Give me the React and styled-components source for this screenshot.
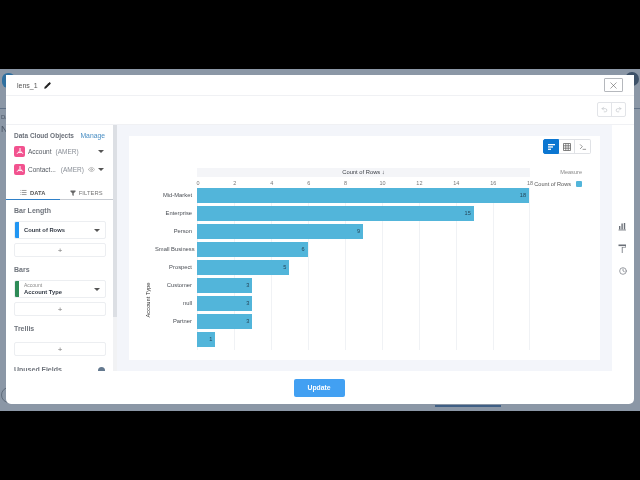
import React from "react";
import styled, { createGlobalStyle } from "styled-components";
import { X, Undo2, Redo2, Terminal, List, Filter, Eye, Pencil, Clock } from "lucide-react";

const GlobalStyle = createGlobalStyle`
  html, body { margin: 0; padding: 0; background: #000; }
  body { font-family: "Liberation Sans", Arial, sans-serif; }
`;

const Stage = styled.div`
  width: 640px;
  height: 480px;
  background: #000;
  padding-top: 69px;
  box-sizing: border-box;
  overflow: hidden;
`;
const Backdrop = styled.div`
  position: relative;
  height: 342px;
  background: #8b97a6;
  filter: blur(0.3px);
`;
const BackLogo = styled.div`
  position: absolute;
  left: 2px;
  top: 4px;
  width: 13px;
  height: 15px;
  border-radius: 6px;
  background: #2f6f9f;
`;
const BackAvatar = styled.div`
  position: absolute;
  right: 1px;
  top: 3px;
  width: 14px;
  height: 14px;
  border-radius: 50%;
  background: #3d5168;
`;
const BackRule = styled.div`
  position: absolute;
  left: 0;
  right: 0;
  top: 39px;
  height: 1px;
  background: #5f7086;
`;
const BackText = styled.div`
  position: absolute;
  left: 1px;
  top: ${(p) => p.$top}px;
  font-size: ${(p) => p.$size}px;
  color: #4a5564;
`;
const BackCircle = styled.div`
  position: absolute;
  left: 1px;
  bottom: 8px;
  width: 16px;
  height: 16px;
  border: 1px solid #5f6b7a;
  border-radius: 50%;
  box-sizing: border-box;
`;
const BackTab = styled.div`
  position: absolute;
  left: 435px;
  bottom: 4px;
  width: 66px;
  height: 2px;
  background: #3f5f85;
`;
const Modal = styled.div`
  position: absolute;
  left: 6px;
  top: 6px;
  width: 628px;
  height: 329px;
  background: #fff;
  border-radius: 0 0 5px 5px;
  display: flex;
  flex-direction: column;
  overflow: hidden;
`;
const Header = styled.div`
  height: 20px;
  flex: none;
  display: flex;
  align-items: center;
  justify-content: space-between;
  padding: 0 11px;
  border-bottom: 1px solid #f0f1f4;
`;
const Title = styled.div`
  display: flex;
  align-items: center;
  gap: 6px;
  font-size: 7px;
  color: #555;
`;
const CloseButton = styled.div`
  width: 19px;
  height: 14px;
  box-sizing: border-box;
  border: 1px solid #b5b8bd;
  border-radius: 1px;
  color: #555;
  display: flex;
  align-items: center;
  justify-content: center;
`;
const Toolbar = styled.div`
  height: 28px;
  flex: none;
  display: flex;
  align-items: center;
  justify-content: flex-end;
  padding: 0 8px 1px 0;
  box-sizing: border-box;
`;
const UndoGroup = styled.div`
  display: flex;
  border: 1px solid #e2e4e8;
  border-radius: 2px;
`;
const UndoCell = styled.div`
  width: 13px;
  height: 13px;
  display: flex;
  align-items: center;
  justify-content: center;
  color: #b9bcc2;
  & + & { border-left: 1px solid #e2e4e8; }
`;
const Body = styled.div`
  flex: 1;
  min-height: 0;
  display: flex;
  border-top: 1px solid #f0f1f4;
`;
const Sidebar = styled.div`
  width: 107px;
  flex: none;
  overflow: hidden;
  padding-top: 5px;
  box-sizing: border-box;
`;
const SidePad = styled.div`
  padding: 0 7px 0 8px;
`;
const ObjectsHead = styled.div`
  display: flex;
  justify-content: space-between;
  align-items: center;
  height: 10px;
  margin-bottom: -2px;
  font-size: 6.5px;
  font-weight: 700;
  color: #6a6f78;
`;
const ManageLink = styled.span`
  font-weight: 400;
  font-size: 6.8px;
  color: #4a8fc4;
  padding-right: 1px;
`;
const ObjectRow = styled.div`
  display: flex;
  align-items: center;
  height: 10px;
  margin-top: 8px;
  font-size: 6.5px;
  color: #555a62;
`;
const ObjectIcon = styled.div`
  width: 11px;
  height: 11px;
  border-radius: 2px;
  background: #f2528f;
  margin-right: 3px;
  flex: none;
  display: flex;
  align-items: center;
  justify-content: center;
`;
const ObjectRegion = styled.span`
  color: #8a8f97;
  margin-left: ${(p) => p.$gap}px;
`;
const Caret = styled.span`
  margin-left: auto;
  margin-right: ${(p) => p.$right}px;
  width: 0;
  height: 0;
  border-left: 3px solid transparent;
  border-right: 3px solid transparent;
  border-top: 3.5px solid #555;
`;
const Tabs = styled.div`
  display: flex;
  margin-top: 12px;
  height: 13px;
  border-bottom: 1px solid #c9cdd3;
`;
const TabItem = styled.div`
  flex: 1;
  display: flex;
  align-items: center;
  justify-content: center;
  gap: 3px;
  font-size: 5.8px;
  letter-spacing: 0.1px;
  font-weight: ${(p) => (p.$active ? 700 : 400)};
  color: ${(p) => (p.$active ? "#555" : "#777")};
  box-shadow: ${(p) => (p.$active ? "0 1px 0 #2f80c8" : "none")};
`;
const SectionLabel = styled.div`
  font-size: 7px;
  font-weight: 700;
  color: #6f747c;
  height: 10px;
  line-height: 10px;
  margin-top: ${(p) => p.$top}px;
  margin-bottom: ${(p) => p.$bottom}px;
  display: flex;
  justify-content: space-between;
  align-items: center;
`;
const FieldCard = styled.div`
  height: 18px;
  border: 1px solid #eceef1;
  border-radius: 2px;
  box-sizing: border-box;
  display: flex;
  align-items: center;
  overflow: hidden;
  font-size: 5.8px;
  font-weight: 700;
  color: #333a45;
`;
const FieldStripe = styled.div`
  width: 5px;
  align-self: stretch;
  margin: -1px 5px -1px -1px;
  background: ${(p) => p.$color};
  border-radius: 2px 0 0 2px;
  flex: none;
`;
const FieldText = styled.div`
  line-height: 7px;
`;
const FieldSub = styled.div`
  font-size: 5px;
  font-weight: 400;
  color: #888;
`;
const AddBox = styled.div`
  height: 14px;
  margin-top: ${(p) => p.$top}px;
  border: 1px solid #eceef1;
  border-radius: 2px;
  box-sizing: border-box;
  display: flex;
  align-items: center;
  justify-content: center;
  font-size: 8px;
  color: #777;
`;
const InfoDot = styled.div`
  width: 7px;
  height: 7px;
  border-radius: 50%;
  background: #64798f;
  margin-right: 1px;
`;
const ScrollTrack = styled.div`
  width: 4px;
  flex: none;
  background: #f1f2f4;
`;
const ScrollThumb = styled.div`
  height: 192px;
  background: #dcdfe4;
`;
const Canvas = styled.div`
  width: 495px;
  flex: none;
  background: #f3f5fa;
  padding: 11px 12px;
  box-sizing: border-box;
  display: flex;
`;
const ChartCard = styled.div`
  flex: 1;
  background: #fff;
  padding: 3px 7px 0 0;
  box-sizing: border-box;
`;
const ChartTools = styled.div`
  display: flex;
  justify-content: flex-end;
  margin-right: 2px;
`;
const ToolButton = styled.div`
  width: 16px;
  height: 15px;
  box-sizing: border-box;
  display: flex;
  align-items: center;
  justify-content: center;
  border: 1px solid ${(p) => (p.$active ? "#0b76d1" : "#e0e2e6")};
  background: ${(p) => (p.$active ? "#0b76d1" : "#fff")};
  color: ${(p) => (p.$active ? "#fff" : "#666")};
  border-left-width: ${(p) => (p.$active ? 1 : 0)}px;
  &:first-child { border-radius: 2px 0 0 2px; }
  &:last-child { border-radius: 0 2px 2px 0; }
`;
const ChartRow = styled.div`
  display: flex;
  margin-top: 14px;
`;
const AxisTitle = styled.div`
  width: 26px;
  flex: none;
  display: flex;
  align-items: center;
  justify-content: center;
  padding: 84px 0 0 12px;
  box-sizing: border-box;
  height: 180px;
`;
const AxisTitleText = styled.div`
  transform: rotate(-90deg);
  white-space: nowrap;
  font-size: 5.8px;
  color: #333;
`;
const RowLabels = styled.div`
  width: 42px;
  flex: none;
  padding-top: 20px;
`;
const RowLabel = styled.div`
  height: 18px;
  font-size: 5.8px;
  line-height: 15px;
  color: #4a4e55;
  text-align: right;
  padding-right: 5px;
  box-sizing: border-box;
  white-space: nowrap;
`;
const Plot = styled.div`
  width: 333px;
  flex: none;
`;
const AxisBand = styled.div`
  height: 9px;
  background: #f4f5f8;
  font-size: 5.8px;
  line-height: 9px;
  color: #3d4148;
  text-align: center;
`;
const Ticks = styled.div`
  height: 11px;
  position: relative;
`;
const Tick = styled.span`
  position: absolute;
  top: 3px;
  transform: translateX(-50%);
  font-size: 5.5px;
  line-height: 7px;
  color: #777;
`;
const Bars = styled.div`
  background-image: linear-gradient(to right, #f0f2f5 1px, transparent 1px);
  background-size: 37px 100%;
  border-right: 1px solid #f0f2f5;
`;
const BarRow = styled.div`
  height: 18px;
`;
const Bar = styled.div`
  height: 15px;
  background: #52b5da;
  font-size: 5.6px;
  line-height: 15px;
  color: #24465a;
  text-align: right;
  padding-right: 3px;
  box-sizing: border-box;
`;
const Legend = styled.div`
  flex: none;
  width: 47px;
  margin-left: 5px;
  font-size: 5.6px;
`;
const LegendTitle = styled.div`
  color: #888;
  text-align: right;
  height: 13px;
  line-height: 9px;
`;
const LegendItem = styled.div`
  display: flex;
  align-items: center;
  justify-content: flex-end;
  gap: 5px;
  color: #555;
  white-space: nowrap;
`;
const LegendSwatch = styled.div`
  width: 6px;
  height: 6px;
  border-radius: 1px;
  background: #52b5da;
  flex: none;
`;
const Rail = styled.div`
  flex: 1;
  display: flex;
  flex-direction: column;
  align-items: center;
  gap: 13px;
  padding: 97px 1px 0 0;
  color: #6b7078;
`;
const Footer = styled.div`
  height: 33px;
  flex: none;
  display: flex;
  align-items: center;
  justify-content: center;
`;
const UpdateButton = styled.div`
  width: 51px;
  height: 18px;
  margin-left: -2px;
  background: #42a0f2;
  border-radius: 2px;
  color: #fff;
  font-size: 6.8px;
  font-weight: 700;
  display: flex;
  align-items: center;
  justify-content: center;
`;

const rows = [
  ["Mid-Market", 18],
  ["Enterprise", 15],
  ["Person", 9],
  ["Small Business", 6],
  ["Prospect", 5],
  ["Customer", 3],
  ["null", 3],
  ["Partner", 3],
  ["", 1],
];
const ticks = [0, 2, 4, 6, 8, 10, 12, 14, 16, 18];
const UNIT = 18.45;

const ObjectGlyph = () => (
  <svg width="8" height="8" viewBox="0 0 8 8" fill="none" stroke="#fff" strokeWidth="1">
    <path d="M4 1 V3.5 L1 6.8 M4 3.5 L7 6.8 M2.2 5.6 H5.8" />
  </svg>
);

const BarsGlyph = () => (
  <svg width="9" height="9" viewBox="0 0 9 9" fill="currentColor">
    <rect x="1" y="4" width="1.4" height="3.5" />
    <rect x="3.4" y="1.5" width="1.4" height="6" />
    <rect x="5.8" y="1" width="1.4" height="6.5" />
    <rect x="0.5" y="7.6" width="7.5" height="0.8" />
  </svg>
);

const RollerGlyph = () => (
  <svg width="9" height="10" viewBox="0 0 9 10" fill="currentColor">
    <rect x="0.5" y="0.5" width="7.5" height="1.6" />
    <path d="M8 2 V3.6 H4.6 V9 H3.8 V3 H7.4 V2 Z" />
  </svg>
);

const HBarsGlyph = () => (
  <svg width="9" height="8" viewBox="0 0 9 8" fill="currentColor">
    <rect x="1" y="1" width="7" height="1.3" />
    <rect x="1" y="3.3" width="5" height="1.3" />
    <rect x="1" y="5.6" width="3" height="1.3" />
  </svg>
);

const GridGlyph = () => (
  <svg width="8" height="8" viewBox="0 0 8 8" fill="none" stroke="currentColor" strokeWidth="0.8">
    <path d="M0.5 0.5 H7.5 V7.5 H0.5 Z M0.5 2.8 H7.5 M0.5 5.2 H7.5 M2.8 0.5 V7.5 M5.2 0.5 V7.5" />
  </svg>
);

export default function App() {
  return (
    <Stage>
      <GlobalStyle />
      <Backdrop>
        <BackLogo />
        <BackAvatar />
        <BackRule />
        <BackText $top={45} $size={6}>Da</BackText>
        <BackText $top={55} $size={9}>N</BackText>
        <BackCircle />
        <BackTab />
        <Modal>
          <Header>
            <Title>
              lens_1
              <Pencil size={7} fill="#222" color="#222" />
            </Title>
            <CloseButton>
              <X size={11} strokeWidth={1.2} />
            </CloseButton>
          </Header>
          <Toolbar>
            <UndoGroup>
              <UndoCell><Undo2 size={7} /></UndoCell>
              <UndoCell><Redo2 size={7} /></UndoCell>
            </UndoGroup>
          </Toolbar>
          <Body>
            <Sidebar>
              <SidePad>
                <ObjectsHead>
                  Data Cloud Objects
                  <ManageLink>Manage</ManageLink>
                </ObjectsHead>
                <ObjectRow>
                  <ObjectIcon><ObjectGlyph /></ObjectIcon>
                  Account
                  <ObjectRegion $gap={4}>(AMER)</ObjectRegion>
                  <Caret $right={2} />
                </ObjectRow>
                <ObjectRow>
                  <ObjectIcon><ObjectGlyph /></ObjectIcon>
                  Contact...
                  <ObjectRegion $gap={5}>(AMER)</ObjectRegion>
                  <Eye size={7} color="#999" style={{ marginLeft: 4 }} />
                  <Caret $right={2} />
                </ObjectRow>
              </SidePad>
              <Tabs>
                <TabItem $active><List size={7} />DATA</TabItem>
                <TabItem><Filter size={6} fill="#666" />FILTERS</TabItem>
              </Tabs>
              <SidePad>
                <SectionLabel $top={6} $bottom={5}>Bar Length</SectionLabel>
                <FieldCard>
                  <FieldStripe $color="#2196f3" />
                  <FieldText>Count of Rows</FieldText>
                  <Caret $right={5} />
                </FieldCard>
                <AddBox $top={4}>+</AddBox>
                <SectionLabel $top={8} $bottom={5}>Bars</SectionLabel>
                <FieldCard>
                  <FieldStripe $color="#2e8b57" />
                  <FieldText>
                    <FieldSub>Account</FieldSub>
                    Account Type
                  </FieldText>
                  <Caret $right={5} />
                </FieldCard>
                <AddBox $top={4}>+</AddBox>
                <SectionLabel $top={8} $bottom={8}>Trellis</SectionLabel>
                <AddBox $top={0}>+</AddBox>
                <SectionLabel $top={9} $bottom={0}>
                  Unused Fields
                  <InfoDot />
                </SectionLabel>
              </SidePad>
            </Sidebar>
            <ScrollTrack><ScrollThumb /></ScrollTrack>
            <Canvas>
              <ChartCard>
                <ChartTools>
                  <ToolButton $active><HBarsGlyph /></ToolButton>
                  <ToolButton><GridGlyph /></ToolButton>
                  <ToolButton><Terminal size={8} /></ToolButton>
                </ChartTools>
                <ChartRow>
                  <AxisTitle><AxisTitleText>Account Type</AxisTitleText></AxisTitle>
                  <RowLabels>
                    {rows.map(([label], i) => (
                      <RowLabel key={i}>{label}</RowLabel>
                    ))}
                  </RowLabels>
                  <Plot>
                    <AxisBand>Count of Rows ↓</AxisBand>
                    <Ticks>
                      {ticks.map((t) => (
                        <Tick key={t} style={{ left: t * UNIT + 1 }}>{t}</Tick>
                      ))}
                    </Ticks>
                    <Bars>
                      {rows.map(([label, value], i) => (
                        <BarRow key={i}>
                          <Bar style={{ width: value * UNIT }}>{value}</Bar>
                        </BarRow>
                      ))}
                    </Bars>
                  </Plot>
                  <Legend>
                    <LegendTitle>Measure</LegendTitle>
                    <LegendItem>Count of Rows<LegendSwatch /></LegendItem>
                  </Legend>
                </ChartRow>
              </ChartCard>
            </Canvas>
            <Rail>
              <BarsGlyph />
              <RollerGlyph />
              <Clock size={8} />
            </Rail>
          </Body>
          <Footer>
            <UpdateButton>Update</UpdateButton>
          </Footer>
        </Modal>
      </Backdrop>
    </Stage>
  );
}
